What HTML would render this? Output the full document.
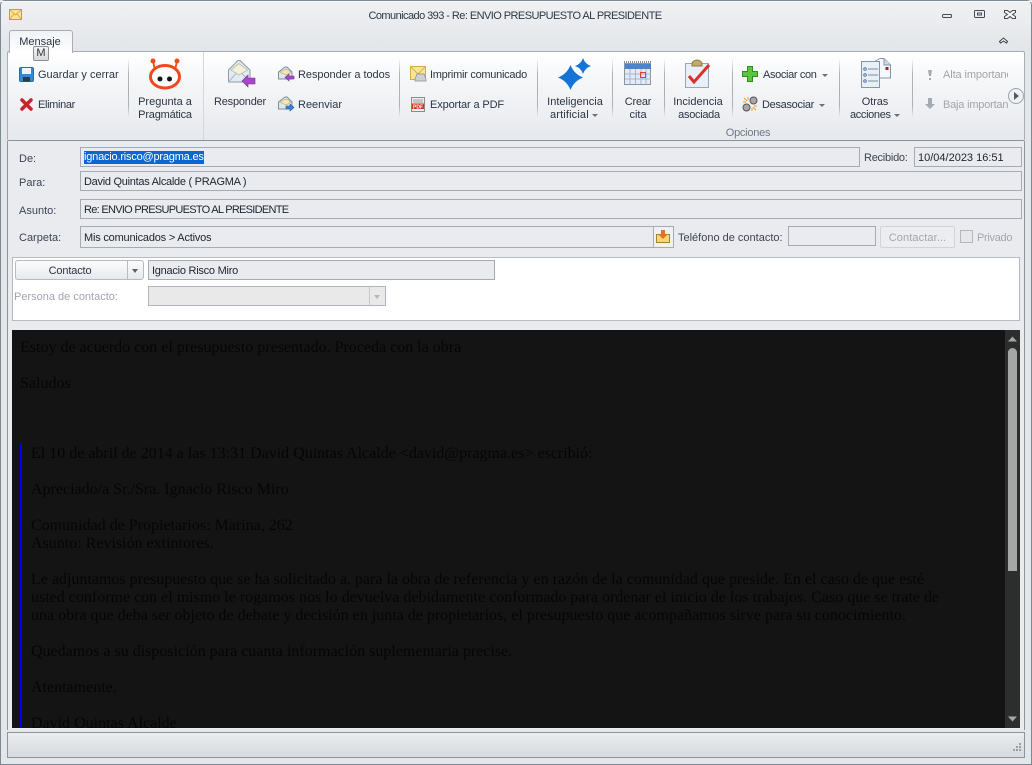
<!DOCTYPE html>
<html><head><meta charset="utf-8"><style>
html,body{margin:0;padding:0;width:1032px;height:765px;overflow:hidden;background:#e4e7ea}
body{position:relative;font:11px "Liberation Sans",sans-serif;color:#2b3544}
.t{position:absolute;white-space:nowrap;line-height:14px;height:14px}
.c{text-align:center;transform:translateX(-50%)}
.b{position:absolute;box-sizing:border-box}
.f{position:absolute;box-sizing:border-box;background:#e9ebef;border:1px solid #a4abb4;color:#1c2430;line-height:16px;padding-left:3px;white-space:nowrap;overflow:hidden}
.sep{position:absolute;width:1px;top:60px;height:58px;background:linear-gradient(#f0f2f4,#aeb2b8 25%,#aeb2b8 80%,#f0f2f4)}
.l{color:#3a4554}
svg{position:absolute;overflow:visible}
.m{position:absolute;left:0;white-space:nowrap;font:16px/18px "Liberation Serif",serif;color:#050505}
.arr{position:absolute;width:0;height:0;border-left:3px solid transparent;border-right:3px solid transparent;border-top:3px solid #6a7078}
</style></head><body>
<div class="b" style="left:0;top:0;width:1032px;height:765px;border:1px solid #7d8892;border-radius:5px 5px 0 0;background:linear-gradient(#f0f1f3,#e2e5e9 50px,#e4e7ea 52px)"></div>
<div class="b" style="left:1px;top:1px;right:1px;height:1px;background:#fafbfb"></div>

<svg style="left:9px;top:9px" width="14" height="11" viewBox="0 0 14 11"><rect x=".5" y=".5" width="12" height="10" fill="#fbe49a" stroke="#c59a3c"/><path d="M1 1l5.500 5 5.500-5M1 10l4-5M12 10l-4-5" fill="none" stroke="#d6aa4a"/></svg>
<div class="t c" style="left:515px;top:9px;color:#2e3745;letter-spacing:-.56px">Comunicado 393 - Re: ENVIO PRESUPUESTO AL PRESIDENTE</div>
<svg style="left:941px;top:10px" width="80" height="12"><rect x="1.500" y="4.500" width="9" height="3" rx="1" fill="none" stroke="#424a56"/><rect x="33.500" y=".5" width="10" height="7" rx="1" fill="none" stroke="#424a56"/><rect x="36.500" y="3" width="4" height="2" fill="none" stroke="#424a56"/><path d="M63.500 .5h3l2.500 2 2.500-2h3v2l-3 2 3 2v2h-3l-2.500-2-2.500 2h-3v-2l3-2-3-2z" fill="#f4f5f6" stroke="#424a56"/></svg>
<svg style="left:999px;top:37px" width="10" height="8"><path d="M.5 4.500L4.500 1l4 3.500-1 1.500-3-2-3 2z" fill="#fff" stroke="#333c48"/></svg>

<!-- ribbon -->
<div class="b" style="left:7px;top:51px;width:1018px;height:90px;background:linear-gradient(#fff,#f5f6f8 35%,#e6e9ed);border:1px solid #a9adb3;border-bottom:1px solid #8b9197;border-radius:2px"></div>
<div class="b" style="left:9px;top:30px;width:64px;height:23px;background:linear-gradient(#f0f2f5,#fff);border:1px solid #a9adb3;border-bottom:0;border-radius:3px 3px 0 0"></div>
<div class="t c" style="left:40px;top:35px">Mensaje</div>
<div class="b" style="left:33px;top:46px;width:16px;height:15px;border:1px solid #8b8f94;border-radius:2px;background:linear-gradient(#f4f4f4,#d8d9db);text-align:center;line-height:13px;color:#333">M</div>

<div class="sep" style="left:128px"></div><div class="sep" style="left:399px"></div><div class="sep" style="left:537px"></div><div class="sep" style="left:612px"></div><div class="sep" style="left:664px"></div><div class="sep" style="left:732px"></div><div class="sep" style="left:839px"></div><div class="sep" style="left:912px"></div>
<div class="b" style="left:203px;top:52px;width:1px;height:88px;background:#d3d6da"></div>

<svg style="left:19px;top:67px" width="15" height="15"><rect x=".5" y=".5" width="14" height="14" rx="1.500" fill="#3a86d0" stroke="#2a6aa8"/><rect x="3" y="1" width="9" height="6" fill="#eef4fa"/><rect x="4" y="10" width="7" height="4.500" fill="#263a50"/></svg>
<div class="t" style="left:38px;top:68px">Guardar y cerrar</div>
<svg style="left:20px;top:98px" width="13" height="13"><path d="M2 2l9 9M11 2l-9 9" stroke="#c8242b" stroke-width="3.500" stroke-linecap="round"/></svg>
<div class="t" style="left:38px;top:98px;letter-spacing:-.35px">Eliminar</div>

<svg style="left:148px;top:57px" width="34" height="34" viewBox="0 0 34 34"><circle cx="5" cy="4" r="2.500" fill="#ee4a1c"/><circle cx="29" cy="4" r="2.500" fill="#ee4a1c"/><path d="M5 4l1.500 7M29 4l-1.500 7" stroke="#ee4a1c" stroke-width="1.800"/><rect x="2.500" y="8.500" width="29" height="22.500" rx="14.500" ry="11.500" fill="#fff" stroke="#ee4a1c" stroke-width="3"/><circle cx="12" cy="22" r="2.500" fill="#151515"/><circle cx="21.500" cy="22" r="2.500" fill="#151515"/></svg>
<div class="t c" style="left:165px;top:95px">Pregunta a</div>
<div class="t c" style="left:165px;top:108px;letter-spacing:-.2px">Pragmática</div>

<svg style="left:228px;top:60px" width="28" height="28" viewBox="0 0 28 28"><path d="M.5 10L10 .5h2L22 10v12H.5z" fill="#e4eaf1" stroke="#8a9bb0"/><path d="M3 10l8-6.500 8.500 6.500-8.500 5z" fill="#f3f0dc" stroke="#c4c2a6"/><path d="M.5 22L8 13.500M22 22L14 13.500" stroke="#a8b8ca" fill="none"/><path d="M27 18h-7v-3l-6 6 6 6v-3h7z" fill="#a648c8" stroke="#7c2b9c" stroke-width=".6"/></svg>
<div class="t c" style="left:240px;top:95px;letter-spacing:-.2px">Responder</div>

<svg style="left:278px;top:66px" width="16" height="16" viewBox="0 0 16 16"><path d="M.5 6L7 1h2l5 5v7H.5z" fill="#dfe6ee" stroke="#7d8ea3"/><path d="M2 6l6-3 5 3-5 3z" fill="#f3e9b8" stroke="#c0a85c" stroke-width=".6"/><path d="M16 10h-5V8l-4 3.500 4 3.500v-2h5z" fill="#a648c8" stroke="#7c2b9c" stroke-width=".6"/></svg>
<div class="t" style="left:298px;top:68px;letter-spacing:-.05px">Responder a todos</div>
<svg style="left:278px;top:96px" width="16" height="16" viewBox="0 0 16 16"><path d="M.5 6L7 1h2l5 5v7H.5z" fill="#dfe6ee" stroke="#7d8ea3"/><path d="M2 6l6-3 5 3-5 3z" fill="#f3e9b8" stroke="#c0a85c" stroke-width=".6"/><path d="M8 10h4V8l4 3.500L12 15v-2H8z" fill="#3f7fd8" stroke="#245aa8" stroke-width=".6"/></svg>
<div class="t" style="left:298px;top:98px">Reenviar</div>

<svg style="left:410px;top:66px" width="17" height="16" viewBox="0 0 17 16"><rect x=".5" y=".5" width="15" height="13" fill="#fbe49a" stroke="#d3ab4e"/><path d="M1 1l7 7 7-7" fill="none" stroke="#d6b050"/><path d="M5 13l2-5h7l2 5v2H5z" fill="#cdd2d6" stroke="#868c92" stroke-width=".7"/></svg>
<div class="t" style="left:430px;top:68px;letter-spacing:-.27px">Imprimir comunicado</div>
<svg style="left:411px;top:97px" width="14" height="15"><rect x=".5" y=".5" width="13" height="14" fill="#f0f0f0" stroke="#8a8a8a"/><path d="M2 3h10M2 5h10" stroke="#9a9a9a"/><rect x="1" y="6.500" width="12" height="5.500" fill="#d83020"/><text x="7" y="11.300" text-anchor="middle" font-family="Liberation Sans" font-weight="bold" font-size="5" fill="#fff">PDF</text></svg>
<div class="t" style="left:430px;top:98px;letter-spacing:-.13px">Exportar a PDF</div>

<svg style="left:558px;top:58px" width="34" height="34" viewBox="0 0 34 34"><path d="M12.500 7Q16 16 25 19.500Q16 23 12.500 32Q9 23 0 19.500Q9 16 12.500 7z" fill="#1274d6"/><path d="M25 0Q27 6 33 8Q27 10 25 16Q23 10 17 8Q23 6 25 0z" fill="#1274d6"/></svg>
<div class="t c" style="left:575px;top:95px">Inteligencia</div>
<div class="t" style="left:550px;top:108px;letter-spacing:.15px">artificial</div><div class="arr" style="left:592px;top:114px"></div>

<svg style="left:624px;top:61px" width="28" height="25" viewBox="0 0 28 25"><rect x=".5" y="2.500" width="26" height="21" fill="#e4ebf6" stroke="#8a95a3"/><rect x="1" y="3" width="26" height="5" fill="#4d83c8"/><path d="M0 1h27" stroke="#222" stroke-dasharray="1 1"/><path d="M1 13h26M1 18h26M6 8v15M11.500 8v15M17 8v15M22 8v15" stroke="#a6b6d0"/><rect x="16.500" y="11.500" width="5" height="5" fill="none" stroke="#d9442a"/></svg>
<div class="t c" style="left:638px;top:95px;letter-spacing:-.2px">Crear</div>
<div class="t c" style="left:638px;top:108px">cita</div>

<svg style="left:685px;top:59px" width="26" height="29" viewBox="0 0 26 29"><rect x=".5" y="4.500" width="23" height="24" fill="#e8eff9" stroke="#9aa6b4"/><path d="M7 5c0-2 2-4 5-4s5 2 5 4v2H7z" fill="#c6a868" stroke="#8d7a4c"/><path d="M4 17l5 6L24 6" fill="none" stroke="#d9302a" stroke-width="3"/></svg>
<div class="t c" style="left:698px;top:95px">Incidencia</div>
<div class="t c" style="left:699px;top:108px;letter-spacing:-.3px">asociada</div>
<div class="t c" style="left:748px;top:126px;color:#6e7888;letter-spacing:-.25px">Opciones</div>

<svg style="left:742px;top:66px" width="16" height="16"><path d="M5.500.5h5v5h5v5h-5v5h-5v-5h-5v-5h5z" fill="#5cc43e" stroke="#2c8f22"/></svg>
<div class="t" style="left:763px;top:68px;letter-spacing:-.36px">Asociar con</div><div class="arr" style="left:822px;top:74px"></div>
<svg style="left:742px;top:96px" width="16" height="16"><circle cx="11.500" cy="4.500" r="3.500" fill="#a8a8a8" stroke="#555"/><circle cx="4.500" cy="11.500" r="3.500" fill="#a8a8a8" stroke="#555"/><path d="M2 2l3 3M6 1v3M1 6h3M14 14l-3-3M10 15v-3M15 10h-3" stroke="#ee9a20"/></svg>
<div class="t" style="left:762px;top:98px;letter-spacing:-.3px">Desasociar</div><div class="arr" style="left:819px;top:104px"></div>

<svg style="left:860px;top:58px" width="31" height="31" viewBox="0 0 31 31"><path d="M15.500 3L20 .5h4l6.500 6.500v13h-15z" fill="#f4f7fb" stroke="#8794a5"/><path d="M24 .5V7h6.500" fill="#cdd8e6" stroke="#8794a5"/><rect x="25.500" y="9" width="3" height="3" fill="#c81020"/><rect x="1.500" y="3.500" width="18" height="26" fill="#e9eff7" stroke="#8794a5"/><path d="M8 11h10M8 17h10M8 23h10" stroke="#7d8ea3"/><circle cx="5" cy="11" r="1.300" fill="none" stroke="#5078a8"/><circle cx="5" cy="17" r="1.300" fill="none" stroke="#5078a8"/><circle cx="5" cy="23" r="1.300" fill="none" stroke="#5078a8"/></svg>
<div class="t c" style="left:875px;top:95px;letter-spacing:-.1px">Otras</div>
<div class="t" style="left:850px;top:108px;letter-spacing:-.35px">acciones</div><div class="arr" style="left:894px;top:114px"></div>

<svg style="left:927px;top:69px" width="6" height="12"><path d="M1 1h4l-1 6H2zM2 9h2v2H2z" fill="#a6abb2"/></svg>
<div class="t" style="left:943px;top:68px;width:65px;overflow:hidden;color:#a0a5ac;letter-spacing:-.1px">Alta importancia</div>
<svg style="left:925px;top:98px" width="10" height="11"><path d="M3 0h4v6h3l-5 5-5-5h3z" fill="#a6abb2"/></svg>
<div class="t" style="left:943px;top:98px;width:65px;overflow:hidden;color:#a0a5ac;letter-spacing:-.2px">Baja importancia</div>
<svg style="left:1008px;top:88px" width="16" height="16"><circle cx="8" cy="8" r="7.500" fill="#eef0f3" stroke="#9da3aa"/><path d="M6 4l5 4-5 4z" fill="#555b63"/></svg>

<!-- form -->
<div class="b" style="left:7px;top:141px;width:1018px;height:589px;background:#e9ebef;border-left:1px solid #8d949c;border-right:1px solid #8d949c"></div>
<div class="t l" style="left:19px;top:152px">De:</div>
<div class="f" style="left:80px;top:147px;width:780px;height:20px"><span style="background:#0a67cf;color:#fff;display:inline-block;height:13px;line-height:13px;margin-top:3px;letter-spacing:-.2px;vertical-align:top">ignacio.risco@pragma.es</span></div>
<div class="t l" style="left:864px;top:151px;letter-spacing:-.25px">Recibido:</div>
<div class="f" style="left:914px;top:147px;width:108px;height:20px;line-height:20px">10/04/2023 16:51</div>
<div class="t l" style="left:19px;top:176px">Para:</div>
<div class="f" style="left:80px;top:171px;width:942px;height:20px;line-height:20px;letter-spacing:-.28px">David Quintas Alcalde ( PRAGMA )</div>
<div class="t l" style="left:19px;top:204px">Asunto:</div>
<div class="f" style="left:80px;top:199px;width:942px;height:20px;line-height:20px;letter-spacing:-.71px">Re: ENVIO PRESUPUESTO AL PRESIDENTE</div>
<div class="t l" style="left:19px;top:231px">Carpeta:</div>
<div class="f" style="left:80px;top:226px;width:574px;height:22px;line-height:22px;letter-spacing:-.2px">Mis comunicados &gt; Activos</div>
<div class="b" style="left:653px;top:226px;width:21px;height:22px;border:1px solid #a4abb4;background:#f0f1f3"></div>
<svg style="left:656px;top:229px" width="15" height="15"><rect x=".5" y="5.500" width="13" height="8" fill="#f6d67c" stroke="#a8822c"/><path d="M5 1h4v5h2l-4 4-4-4h2z" fill="#e8701c"/></svg>
<div class="t l" style="left:678px;top:231px">Teléfono de contacto:</div>
<div class="f" style="left:788px;top:226px;width:88px;height:20px"></div>
<div class="b" style="left:880px;top:226px;width:75px;height:22px;border:1px solid #d0d3d8;border-radius:2px;text-align:center;line-height:22px;color:#a2a6ad;letter-spacing:.1px;background:#ebedf0;white-space:nowrap">Contactar...</div>
<div class="b" style="left:960px;top:230px;width:13px;height:13px;border:1px solid #b4b8be;background:#e6e7ea"></div>
<div class="t" style="left:977px;top:231px;color:#a2a6ad;letter-spacing:-.3px">Privado</div>

<div class="b" style="left:12px;top:257px;width:1008px;height:64px;background:#fff;border:1px solid #b6bbc2"></div>
<div class="b" style="left:15px;top:260px;width:129px;height:20px;border:1px solid #b6bbc2;border-radius:3px;background:linear-gradient(#fbfcfc,#e6e9ec)"></div>
<div class="b" style="left:127px;top:261px;width:1px;height:18px;background:#b6bbc2"></div>
<div class="arr" style="left:132px;top:269px;border-left-width:3.500px;border-right-width:3.500px;border-top-width:4px;border-top-color:#5a6068"></div>
<div class="t c" style="left:70px;top:264px;letter-spacing:-.15px">Contacto</div>
<div class="f" style="left:148px;top:260px;width:347px;height:20px;line-height:20px;letter-spacing:-.25px">Ignacio Risco Miro</div>
<div class="t" style="left:14px;top:290px;color:#a2a6ad">Persona de contacto:</div>
<div class="b" style="left:148px;top:286px;width:238px;height:20px;border:1px solid #b2b6bc;background:#e9e9ea"></div>
<div class="b" style="left:369px;top:287px;width:1px;height:18px;background:#c6c9cd"></div>
<div class="arr" style="left:374px;top:295px;border-left-width:3.500px;border-right-width:3.500px;border-top-width:4px;border-top-color:#b4b7bc"></div>

<!-- message -->
<div class="b" style="left:12px;top:330px;width:1008px;height:398px;background:#141414;overflow:hidden">
 <div class="m" style="left:8px;top:9px">Estoy de acuerdo con el presupuesto presentado. Proceda con la obra</div>
 <div class="m" style="left:8px;top:45px">Saludos</div>
 <div class="b" style="left:8px;top:114px;width:2px;height:300px;background:#0000ff"></div>
 <div class="m" style="left:19px;top:115px">El 10 de abril de 2014 a las 13:31 David Quintas Alcalde &lt;david@pragma.es&gt; escribió:</div>
 <div class="m" style="left:19px;top:151px">Apreciado/a Sr./Sra. Ignacio Risco Miro</div>
 <div class="m" style="left:19px;top:187px">Comunidad de Propietarios: Marina, 262</div>
 <div class="m" style="left:19px;top:205px">Asunto: Revisión extintores.</div>
 <div class="m" style="left:19px;top:241px">Le adjuntamos presupuesto que se ha solicitado a. para la obra de referencia y en razón de la comunidad que preside. En el caso de que esté</div>
 <div class="m" style="left:19px;top:259px">usted conforme con el mismo le rogamos nos lo devuelva debidamente conformado para ordenar el inicio de los trabajos. Caso que se trate de</div>
 <div class="m" style="left:19px;top:277px">una obra que deba ser objeto de debate y decisión en junta de propietarios, el presupuesto que acompañamos sirve para su conocimiento.</div>
 <div class="m" style="left:19px;top:313px">Quedamos a su disposición para cuanta información suplementaria precise.</div>
 <div class="m" style="left:19px;top:349px">Atentamente.</div>
 <div class="m" style="left:19px;top:385px">David Quintas Alcalde</div>
 <div class="b" style="left:993px;top:0;width:15px;height:398px;background:#2d2d2d"></div>
 <svg style="left:996px;top:6px" width="10" height="6"><path d="M0 5.500L4.500 .5 9 5.500z" fill="#a6a6a6"/></svg>
 <div class="b" style="left:996px;top:18px;width:9px;height:223px;background:#a6a6a6;border-radius:4.500px 4.500px 0 0"></div>
 <svg style="left:996px;top:386px" width="10" height="6"><path d="M0 .5L4.500 5.500 9 .5z" fill="#a6a6a6"/></svg>
</div>

<!-- status -->
<div class="b" style="left:7px;top:732px;width:1018px;height:26px;border:1px solid #8d949c;background:linear-gradient(#eaecef,#d6d9dd)"></div>
<svg style="left:1010px;top:742px" width="12" height="12" fill="#9aa0a6"><rect x="9" y="1" width="2" height="2"/><rect x="6" y="4" width="2" height="2"/><rect x="9" y="4" width="2" height="2"/><rect x="3" y="7" width="2" height="2"/><rect x="6" y="7" width="2" height="2"/><rect x="9" y="7" width="2" height="2"/></svg>
</body></html>
